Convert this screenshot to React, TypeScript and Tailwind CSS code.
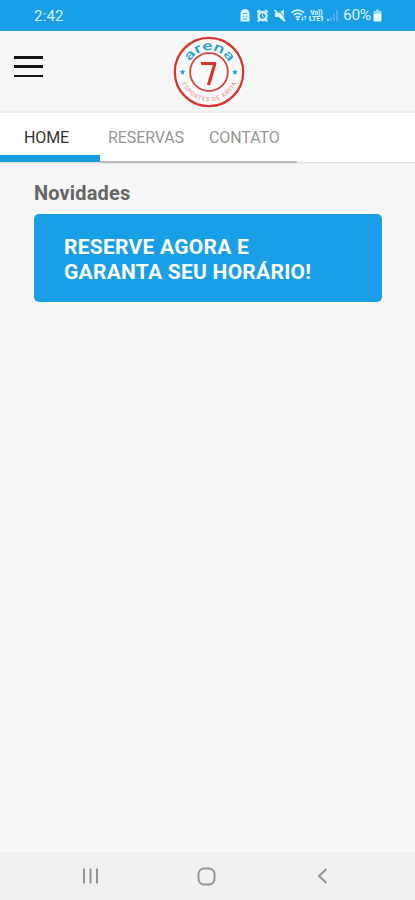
// App.tsx
import { useState } from "react";

const tabs = [
  { id: "home", label: "HOME", className: "w-[100px] pl-6" },
  { id: "reservas", label: "RESERVAS", className: "w-[100px] pl-2" },
  { id: "contato", label: "CONTATO", className: "w-[97px] pl-[9px]" },
];

function StatusIcons() {
  return (
    <svg width="98" height="16" viewBox="240 8 98 16" fill="none" stroke="#d9f1ff">
      {/* app notification */}
      <path d="M240.5 21.5v-8a4.5 4.5 0 0 1 9 0v8z" fill="#d9f1ff" stroke="none" />
      <path d="M242.8 13.5h4.4M242.800 16.300h1.400M245.800 16.300h1.400M243 19h4" stroke="#189fe6" strokeWidth=".8" />
      {/* alarm */}
      <circle cx="262.5" cy="16" r="4" fill="#189fe6" strokeWidth="2.4" />
      <path d="M257.200 12.300l2.800-2.300M267.800 12.300l-2.800-2.300M259.500 19.500l-1.700 2M265.500 19.500l1.700 2" strokeWidth="2" />
      <path d="M262.500 13.800v2.500l1.600.8" strokeWidth="1" />
      {/* muted speaker */}
      <path d="M275 13h3.500l5.500-3.500v12l-5.500-4.500H275z" fill="#d9f1ff" stroke="none" />
      <path d="M277.500 9.500l8 8.500" stroke="#189fe6" strokeWidth="1" />
      <path d="M274.500 10l10.600 11.200" strokeWidth="1.800" />
      {/* wifi */}
      <path d="M291.500 12.600q6.300-5 12.600 0M293.600 15q4.200-3.200 8.400 0M295.600 17.300q2.200-1.600 4.400 0" strokeWidth="1.600" />
      <circle cx="297.800" cy="19.300" r="1.300" fill="#d9f1ff" stroke="none" />
      <path d="M302.500 16.500v4M305.200 16v4M301.300 19l1.200 1.500 1.100-1.500M304 17.300l1.200-1.400 1.200 1.400" strokeWidth=".8" />
      {/* signal bars */}
      <path d="M328 19v2" strokeWidth="1.500" />
      <path d="M331 17v4M334 14v7M337 10v11" strokeWidth="1.300" opacity=".4" />
      <g fill="#d9f1ff" stroke="#d9f1ff" strokeWidth=".2" fontFamily="Roboto, sans-serif" fontWeight="700">
        <text x="310.500" y="14.800" fontSize="6.600" textLength="12" lengthAdjust="spacingAndGlyphs">Vo))</text>
        <text x="309" y="21.200" fontSize="7" textLength="15" lengthAdjust="spacingAndGlyphs">LTE1</text>
      </g>
    </svg>
  );
}

function StatusBar() {
  return (
    <div className="flex h-[31px] shrink-0 items-center bg-[#189fe6] pr-[33px] pl-[34px] text-[#d9f1ff]">
      <span className="pt-px text-[15px] tracking-[0.2px]">2:42</span>
      <div className="ml-auto flex items-center">
        <StatusIcons />
        <span className="ml-[5px] w-[30px] text-[15.5px] tracking-[-0.3px]">60%</span>
        <svg width="9" height="13" viewBox="0 0 9 13">
          <path d="M3 .5h3v1.300h1.200q1.300 0 1.300 1.300V5h-8V3.100q0-1.300 1.300-1.300H3z" fill="#9fd8f7" />
          <path d="M.5 5h8v6.300q0 1.200-1.200 1.200H1.700q-1.200 0-1.200-1.200z" fill="#e5f6ff" />
        </svg>
      </div>
    </div>
  );
}

function Logo() {
  return (
    <svg className="overflow-visible" width="72" height="72" viewBox="-36 -36 72 72" fontFamily="Roboto, sans-serif">
      <defs>
        <path id="logo-top" d="M-21.800 0a21.800 21.800 0 0 1 43.600 0" />
        <path id="logo-bottom" d="M-29.300 0a29.300 29.300 0 0 0 58.600 0" />
      </defs>
      <circle r="34.200" fill="#fcfbfb" stroke="#d9352a" strokeWidth="2.300" />
      <circle r="18.900" fill="none" stroke="#d9443a" strokeWidth="1.800" />
      <path d="M-8-8.500H5.500V-7L-.500 13" fill="none" stroke="#d9352a" strokeWidth="3.200" />
      <text fill="#2a9fd0" fontSize="13" fontWeight="500">
        <textPath href="#logo-top" startOffset="10.500" textLength="48" lengthAdjust="spacingAndGlyphs">
          arena
        </textPath>
      </text>
      <text fill="#dd8882" fontSize="6">
        <textPath href="#logo-bottom" startOffset="11.500" textLength="69" lengthAdjust="spacing">
          ESPORTES DE AREIA
        </textPath>
      </text>
      <path
        id="star"
        d="M-26.500-2l.700 1.300 1.500.2-1.100 1.100.3 1.500-1.400-.7-1.400.7.300-1.500-1.100-1.100 1.500-.2z"
        fill="#2a9fd0"
        stroke="#2a9fd0"
        strokeWidth=".7"
      />
      <use href="#star" x="52.500" />
    </svg>
  );
}

function NavBar() {
  return (
    <div className="flex h-12 shrink-0 items-center bg-[#f1f1f1] text-[#949494]">
      <svg className="ml-[82px]" width="17" height="16" viewBox="0 0 17 16" stroke="currentColor" strokeWidth="2">
        <path d="M2 .5v15M8.500.5v15M15 .5v15" />
      </svg>
      <svg className="ml-[98px]" width="19" height="19" viewBox="0 0 19 19" fill="none" stroke="currentColor" strokeWidth="1.900">
        <rect x="1.500" y="1.500" width="16" height="16" rx="5.500" />
      </svg>
      <svg className="ml-[101px]" width="11" height="16" viewBox="0 0 11 16" fill="none" stroke="currentColor" strokeWidth="1.900">
        <path d="M9.500 1L2 8l7.500 7" />
      </svg>
    </div>
  );
}

export default function App() {
  const [active, setActive] = useState("home");

  return (
    <div className="flex h-[900px] w-full flex-col bg-[#f7f7f7] font-[Roboto,sans-serif]">
      <StatusBar />

      <header className="grid h-20 shrink-0 grid-cols-[1fr_72px_1fr] border-t border-[#eef8fd]">
        <button type="button" aria-label="Menu" className="mt-[24px] ml-[14px] flex h-[21px] w-[29px] flex-col justify-between">
          <span className="h-[2.5px] w-full bg-[#161616]" />
          <span className="h-[2.5px] w-full bg-[#161616]" />
          <span className="h-[2.5px] w-full bg-[#161616]" />
        </button>
        <div className="mt-1 ml-px">
          <Logo />
        </div>
      </header>

      {/* Tabs */}
      <nav className="flex h-[52px] shrink-0 border-t-2 border-b border-t-[#eeeeee] border-b-[#dedede] bg-white shadow-[0_1px_1px_#ececec]">
        {tabs.map((tab) => (
          <button
            key={tab.id}
            type="button"
            onClick={() => setActive(tab.id)}
            className={`${tab.className} text-left text-base tracking-[-0.1px] ${
              active === tab.id
                ? "border-b-[7px] border-[#189bdc] pt-[8px] text-[#333333]"
                : "-mb-px border-b-2 border-[#bdbdbd] pt-[2px] text-[#969696]"
            }`}
          >
            {tab.label}
          </button>
        ))}
      </nav>

      <main className="flex-1 pr-[33px] pl-[34px]">
        <h2 className="mt-[18px] text-[20px] leading-6 font-bold tracking-[0.15px] text-[#666666]">Novidades</h2>
        <div className="mt-[9px] h-[88px] rounded-[5px] bg-[#189fe6] px-[30px] pt-[21px] text-[21px] leading-[25px] font-bold tracking-[0.25px] text-white">
          RESERVE AGORA E<br />
          GARANTA SEU HORÁRIO!
        </div>
      </main>

      <NavBar />
    </div>
  );
}
